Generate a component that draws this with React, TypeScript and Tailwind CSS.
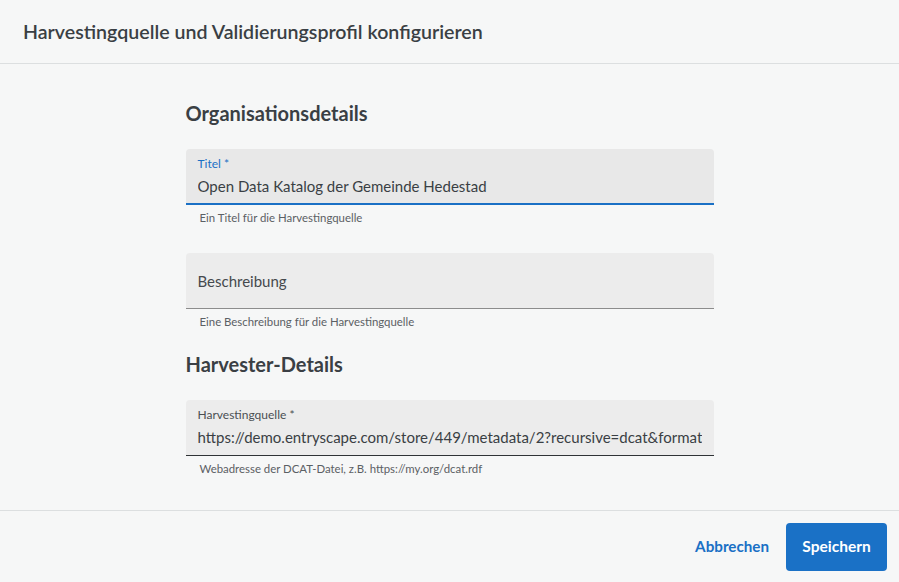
import React from 'react';

const font = { fontFamily: '"Source Sans Pro", Lato, "Noto Sans", sans-serif' };

type FieldProps = {
  label: string;
  value?: string;
  helper: string;
  focused?: boolean;
  dark?: boolean;
};

function Field({ label, value, helper, focused, dark }: FieldProps) {
  const border = focused
    ? 'border-b-2 border-[#1a70c5] bg-[#e8e8e8]'
    : dark
      ? 'border-b border-[#2f3336] bg-[#ececec]'
      : 'border-b border-[#8c8c8c] bg-[#ececec]';
  return (
    <div className="flex flex-col">
      <div className={`flex h-[56px] flex-col justify-center rounded-t px-3 ${border}`}>
        {value ? (
          <>
            <span
              className={`text-[12px] leading-[16px] ${focused ? 'text-[#1a70c5]' : 'text-[#4a4f53]'}`}
            >
              {label}
            </span>
            <span className="mt-[3px] overflow-hidden whitespace-nowrap text-[15px] leading-[22px] text-[#3a3f44]">
              {value}
            </span>
          </>
        ) : (
          <span className="text-[15px] leading-[22px] text-[#45494d]">{label}</span>
        )}
      </div>
      <p className="mt-[5px] px-[14px] text-[11.4px] leading-[16px] text-[#5b6064]">{helper}</p>
    </div>
  );
}

export default function App() {
  return (
    <div className="flex h-[582px] w-full flex-col bg-[#f6f7f7]" style={font}>
      <header className="flex h-[64px] items-center border-b border-[#dcdfe0] px-[23px]">
        <h2 className="text-[19.6px] font-semibold text-[#3a3f44]">
          Harvestingquelle und Validierungsprofil konfigurieren
        </h2>
      </header>

      <main className="flex-1">
        <div className="mx-auto flex w-[528px] flex-col pt-[37px]">
          <h3 className="text-[20px] leading-[24px] font-bold text-[#3a3f44]">
            Organisationsdetails
          </h3>
          <div className="mt-[24px]">
            <Field
              label="Titel *"
              value="Open Data Katalog der Gemeinde Hedestad"
              helper="Ein Titel für die Harvestingquelle"
              focused
            />
          </div>
          <div className="mt-[27px]">
            <Field label="Beschreibung" helper="Eine Beschreibung für die Harvestingquelle" />
          </div>
          <h3 className="mt-[22px] text-[20px] leading-[24px] font-bold text-[#3a3f44]">
            Harvester-Details
          </h3>
          <div className="mt-[24px]">
            <Field
              label="Harvestingquelle *"
              value="https://demo.entryscape.com/store/449/metadata/2?recursive=dcat&format=application/rdf+xml"
              helper="Webadresse der DCAT-Datei, z.B. https://my.org/dcat.rdf"
              dark
            />
          </div>
        </div>
      </main>

      <footer className="flex h-[72px] items-center justify-end gap-[9px] border-t border-[#dcdfe0] px-3">
        <button className="h-[48px] px-2 text-[15.2px] font-bold text-[#1a70c5]">Abbrechen</button>
        <button className="h-[48px] w-[101px] rounded bg-[#1a71c6] text-[15.5px] font-bold text-white">
          Speichern
        </button>
      </footer>
    </div>
  );
}
